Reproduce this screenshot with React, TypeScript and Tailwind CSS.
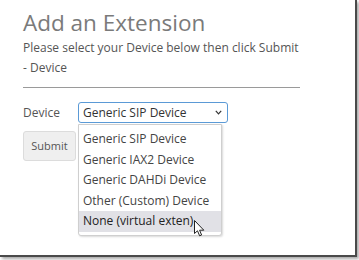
import React from 'react';

const DEVICES = [
  'Generic SIP Device',
  'Generic IAX2 Device',
  'Generic DAHDi Device',
  'Other (Custom) Device',
  'None (virtual exten)',
];

/** Windows-style arrow pointer, drawn over the hovered option. */
function Pointer() {
  return (
    <svg width="12" height="18" viewBox="0 0 12 18" className="absolute left-[194px] top-[220px]">
      <path
        d="M0.5 0.5 L0.5 13.5 L3.5 10.8 L5.6 15.8 L7.6 15 L5.6 10.2 L9.8 10.2 Z"
        fill="#fff"
        stroke="#222"
        strokeWidth="1"
        strokeLinejoin="round"
      />
    </svg>
  );
}

export default function App() {
  const hovered = 4;

  return (
    <div className="w-[359px] h-[260px] bg-white">
      <div
        className="relative w-[357px] h-[257px] bg-white border-r-2 border-b-2 border-[#4a4a4a] shadow-[2px_2px_3px_rgba(0,0,0,0.35)] pl-[23px] pt-[8px] text-[#555]"
        style={{ fontFamily: '"Open Sans", "Noto Sans", sans-serif' }}
      >
        <h1 className="text-[22.5px] leading-[30px] text-[#7a7a7a]">Add an Extension</h1>
        <p className="text-[12px] leading-[20px]">
          Please select your Device below then click Submit
        </p>
        <p className="text-[12px] leading-[20px]">- Device</p>
        <hr className="mt-[9px] w-[277px] border-0 border-t border-[#9a9a9a]" />

        <div className="mt-[14px] flex items-center">
          <span className="w-[55px] text-[12px] leading-[20px]">Device</span>
          <div className="flex h-[21px] w-[150px] items-center justify-between rounded-[3px] border border-[#5b9ad6] pl-[4px] pr-[5px] text-[12px] text-[#333]">
            <span>Generic SIP Device</span>
            <svg width="7" height="5" viewBox="0 0 7 5">
              <polyline points="0.8,0.8 3.5,3.8 6.2,0.8" fill="none" stroke="#333" strokeWidth="1.2" />
            </svg>
          </div>
        </div>

        <button
          type="button"
          className="mt-[8px] h-[30px] w-[53px] rounded-[3px] border border-[#dcdcdc] bg-[#efefef] text-[11px] text-[#555]"
        >
          Submit
        </button>

        {/* open list of the select */}
        <ul className="absolute left-[78px] top-[124px] w-[144px] rounded-b-[3px] border border-[#cfcfcf] bg-white pb-[3px] pt-[4px] shadow-[1px_1px_2px_rgba(0,0,0,0.15)]">
          {DEVICES.map((d, i) => (
            <li
              key={d}
              className={
                'h-[20.5px] pl-[4px] text-[12px] leading-[20.5px] ' +
                (i === hovered ? 'bg-[#e1e1e6] text-[#222]' : 'text-[#444]')
              }
            >
              {d}
            </li>
          ))}
        </ul>

        <Pointer />
      </div>
    </div>
  );
}
